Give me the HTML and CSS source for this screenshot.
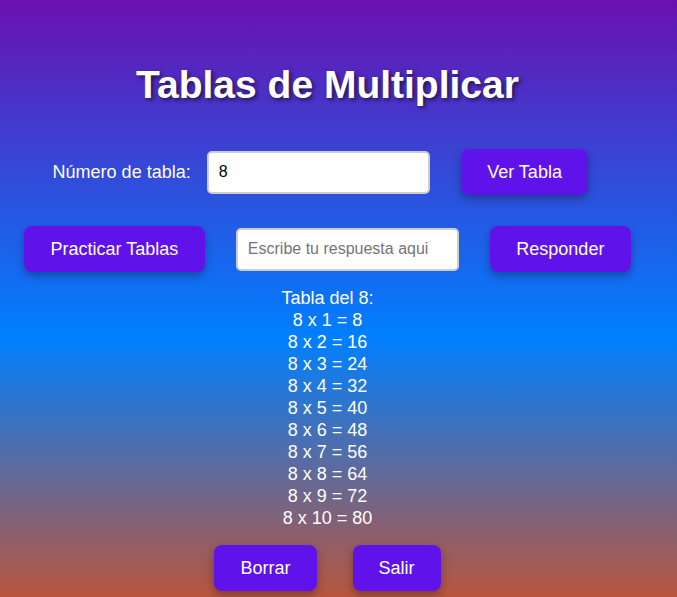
FILE: index.html
```html
<!DOCTYPE html>
<html lang="es">
<head>
<meta charset="utf-8">
<title>Tablas de Multiplicar</title>
<link rel="stylesheet" href="styles.css">
</head>
<body>
<main class="app">
  <h1 class="title">Tablas de Multiplicar</h1>
  <div class="row row-first">
    <label class="label" for="num">Número de tabla:</label>
    <input class="field" id="num" type="text" value="8">
    <button class="btn btn-ver">Ver Tabla</button>
  </div>
  <div class="row row-second">
    <button class="btn">Practicar Tablas</button>
    <input class="field" type="text" placeholder="Escribe tu respuesta aqui">
    <button class="btn">Responder</button>
  </div>
  <div class="result">
    <div>Tabla del 8:</div>
    <div>8 x 1 = 8</div>
    <div>8 x 2 = 16</div>
    <div>8 x 3 = 24</div>
    <div>8 x 4 = 32</div>
    <div>8 x 5 = 40</div>
    <div>8 x 6 = 48</div>
    <div>8 x 7 = 56</div>
    <div>8 x 8 = 64</div>
    <div>8 x 9 = 72</div>
    <div>8 x 10 = 80</div>
  </div>
  <div class="row row-bottom">
    <button class="btn btn-small">Borrar</button>
    <button class="btn btn-small">Salir</button>
  </div>
</main>
</body>
</html>
```

FILE: styles.css
```css
html, body {
  margin: 0;
  padding: 0;
}
body {
  height: 597px;
  overflow: hidden;
  background: linear-gradient(to bottom, #6a11b0 0%, #0080ff 56.5%, #b8553e 100%);
  font-family: "Liberation Sans", Arial, sans-serif;
  color: #fff;
}
.app {
  width: 655px;
  display: flex;
  flex-direction: column;
  align-items: center;
  padding-top: 60px;
}
.title {
  margin: 0;
  font-size: 39px;
  line-height: 50px;
  font-weight: bold;
  text-shadow: 2px 2px 4px rgba(0, 0, 0, 0.6);
}
.row {
  display: flex;
  align-items: center;
  justify-content: center;
}
.row-first {
  margin-top: 39px;
  padding-right: 14px;
}
.row-first .label {
  margin-right: 16px;
}
.row-first .btn-ver {
  margin-left: 31px;
}
.row-second {
  margin-top: 31px;
  gap: 31px;
}
.label {
  font-size: 18px;
}
.field {
  box-sizing: border-box;
  width: 223px;
  height: 43px;
  border: 2px solid #ccc;
  border-radius: 5px;
  padding: 0 10px;
  font-family: "Liberation Sans", Arial, sans-serif;
  font-size: 16px;
  color: #000;
  background: #fff;
  outline: none;
}
.field::placeholder {
  color: #757575;
}
.btn {
  box-sizing: border-box;
  height: 46px;
  padding: 0 26.5px;
  border: none;
  border-radius: 8px;
  background: #6012ea;
  color: #fff;
  font-family: "Liberation Sans", Arial, sans-serif;
  font-size: 18px;
  box-shadow: 0 4px 8px rgba(0, 0, 0, 0.3);
}
.result {
  margin-top: 15px;
  font-size: 18px;
  line-height: 22px;
  text-align: center;
}
.row-bottom {
  margin-top: 16px;
  gap: 36px;
}
.btn-small {
  padding: 0 26px;
}
```
